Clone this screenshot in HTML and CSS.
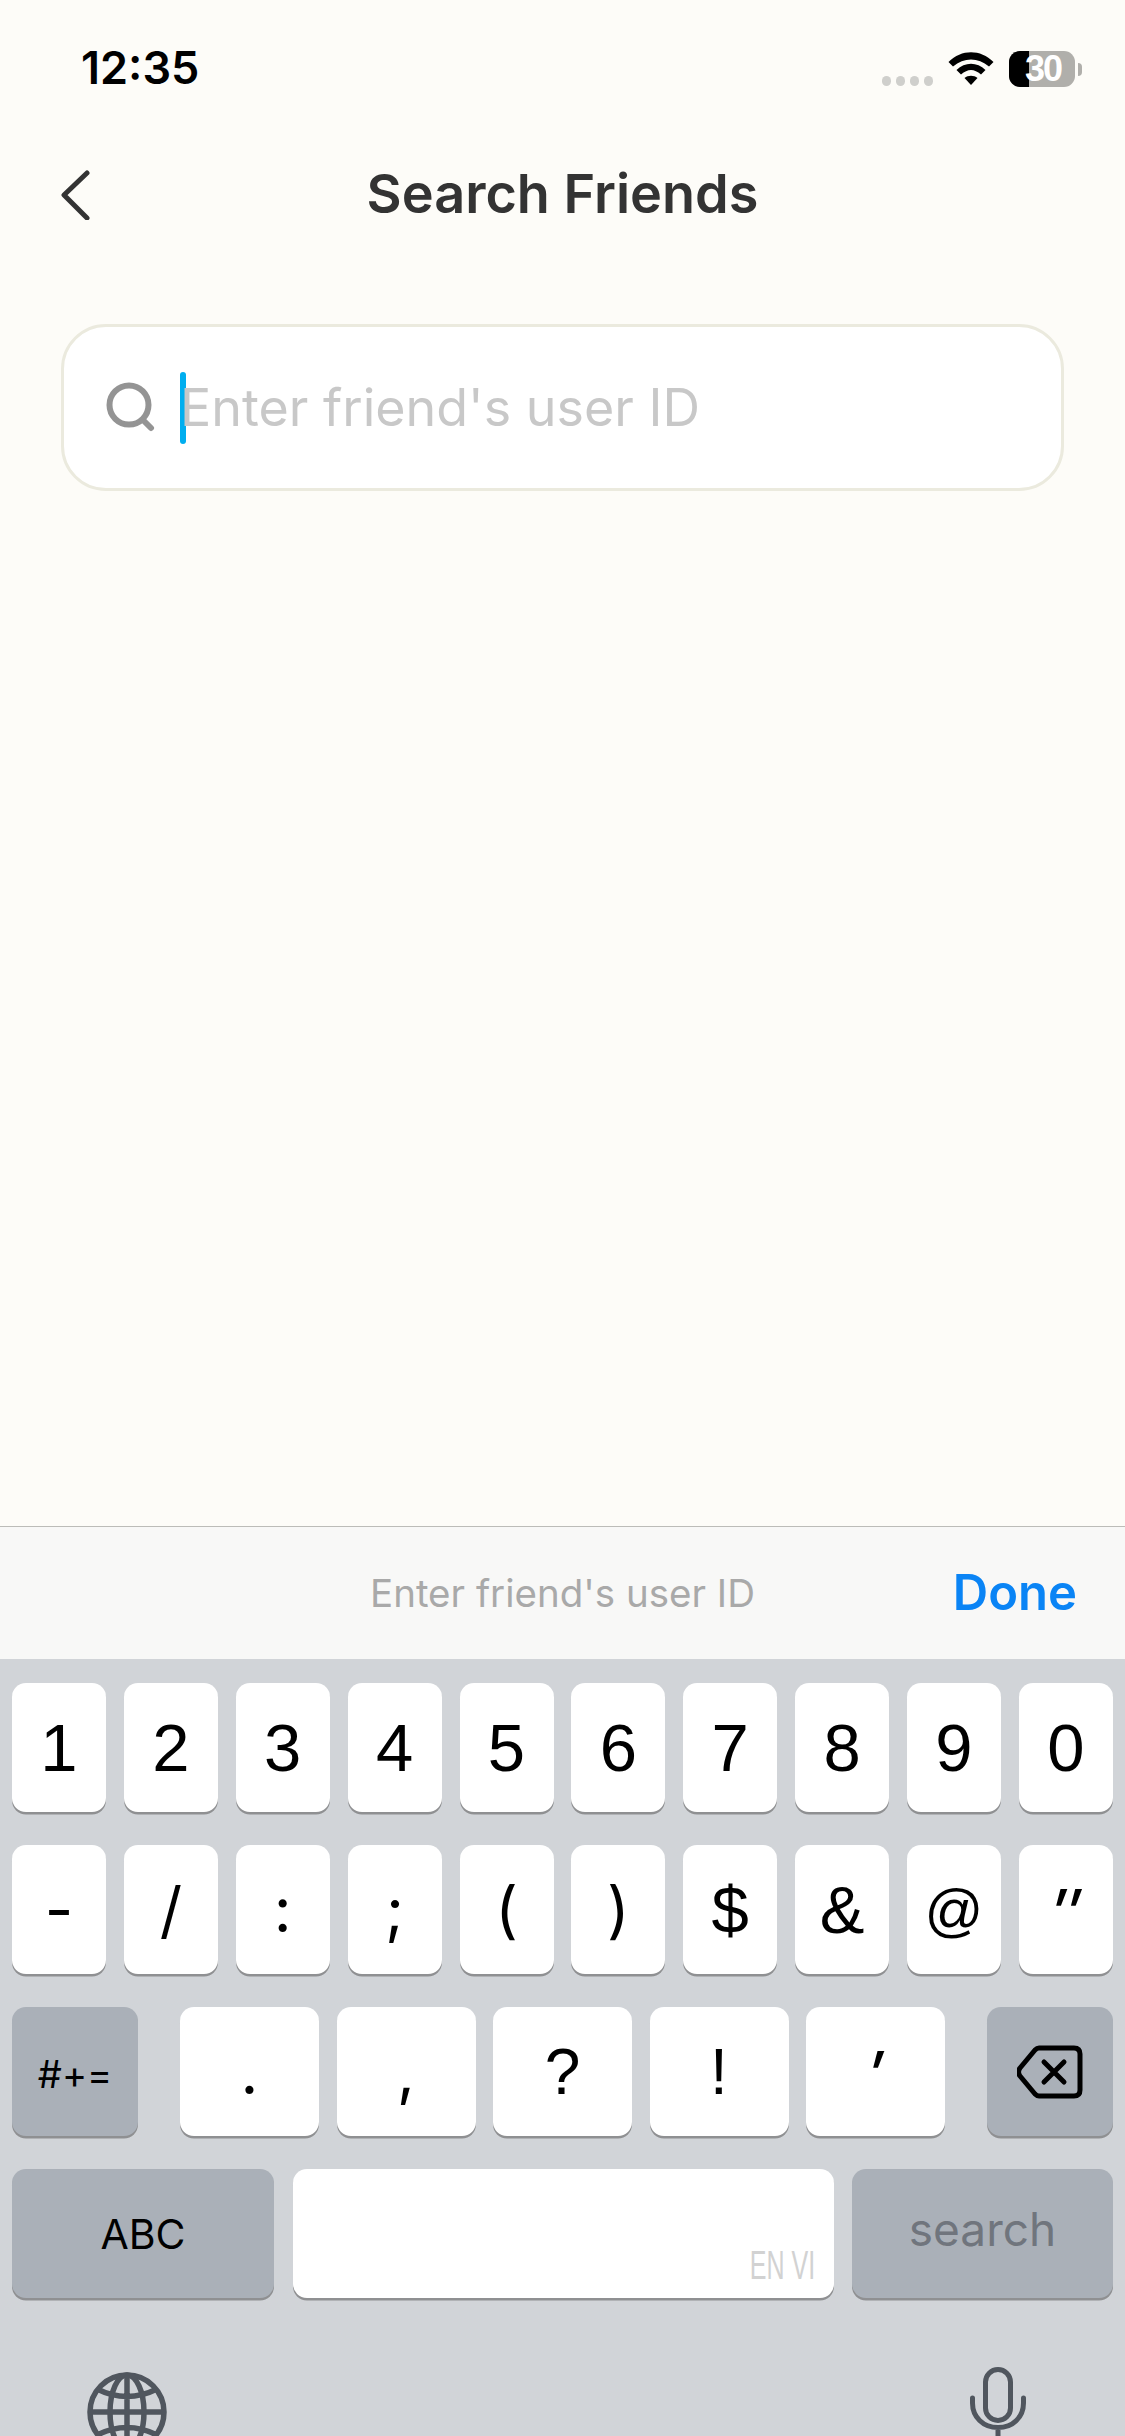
FILE: index.html
```html
<!DOCTYPE html>
<html lang="en">
<head>
<meta charset="utf-8">
<title>Search Friends</title>
<link rel="stylesheet" href="styles.css">
</head>
<body>
<div class="page">
  <div class="status">
    <span class="time">12:35</span>
    <div class="status-icons">
      <div class="dots"><i></i><i></i><i></i><i></i></div>
      <svg class="wifi" viewBox="0 0 46 34"><path d="M0.500 10C13.500 -3 32.500 -3 45.500 10L41 14.500C30 5 16 5 5 14.500Z"/><path d="M8.500 18C17 9.500 29 9.500 37.500 18L33 22.500C26 16.500 20 16.500 13 22.500Z"/><path d="M16.500 26C20 23 26 23 29.500 26L23 33Z"/></svg>
      <div class="battery"><div class="batt-fill"></div><span class="batt-num">30</span></div>
      <div class="batt-nub"></div>
    </div>
  </div>
  <div class="nav">
    <svg class="back" viewBox="0 0 30 50"><path d="M27 3 L4 25 L27 48"/></svg>
    <h1 class="title">Search Friends</h1>
  </div>
  <div class="search">
    <svg class="search-icon" viewBox="0 0 50 54"><circle cx="24" cy="24" r="19.500"/><path d="M38 39 L46 47"/></svg>
    <span class="caret"></span>
    <span class="placeholder">Enter friend's user ID</span>
  </div>
  <div class="spacer"></div>
  <div class="toolbar">
    <span class="tool-hint">Enter friend's user ID</span>
    <span class="done">Done</span>
  </div>
  <div class="keyboard">
    <div class="row">
      <div class="key num">1</div><div class="key num">2</div><div class="key num">3</div><div class="key num">4</div><div class="key num">5</div><div class="key num">6</div><div class="key num">7</div><div class="key num">8</div><div class="key num">9</div><div class="key num">0</div>
    </div>
    <div class="row">
      <div class="key sym">-</div><div class="key sym">/</div><div class="key sym">:</div><div class="key sym">;</div><div class="key sym">(</div><div class="key sym">)</div><div class="key num">$</div><div class="key num">&amp;</div><div class="key num at">@</div><div class="key sym slant">″</div>
    </div>
    <div class="row">
      <div class="key dark side small">#+=</div>
      <div class="punct">
        <div class="key wide">.</div><div class="key wide">,</div><div class="key wide lib">?</div><div class="key wide lib">!</div><div class="key wide slant">′</div>
      </div>
      <div class="key dark side">
        <svg class="del" viewBox="0 0 66 54"><path d="M22 3H57Q63 3 63 9V45Q63 51 57 51H22Q20 51 18 49L3 31Q0 27 3 23L18 5Q20 3 22 3Z"/><path d="M27 17L47 37M47 17L27 37"/></svg>
      </div>
    </div>
    <div class="row">
      <div class="key dark abc">ABC</div>
      <div class="key space"><span class="lang">EN VI</span></div>
      <div class="key dark go">search</div>
    </div>
    <div class="bottom">
      <svg class="globe" viewBox="0 0 80 80"><circle cx="40" cy="40" r="37"/><ellipse cx="40" cy="40" rx="17" ry="37"/><path d="M40 3V77M3 40H77M10 17Q40 32 70 17M10 63Q40 48 70 63"/></svg>
      <svg class="mic" viewBox="0 0 56 70"><rect x="15.500" y="2.500" width="25" height="51" rx="12.500"/><path d="M2.500 31V36C2.500 50 13 60.500 28 60.500C43 60.500 53.500 50 53.500 36V31M28 60.500V70"/></svg>
    </div>
  </div>
</div>
</body>
</html>
```
FILE: styles.css
```css
* { box-sizing: border-box; }
html, body { margin: 0; padding: 0; }
body { width: 1125px; height: 2436px; overflow: hidden; font-family: Inter, "Liberation Sans", sans-serif; }
.page { width: 1125px; height: 2436px; display: flex; flex-direction: column; background: #fdfcf8; overflow: hidden; }

.status { height: 132px; flex: none; display: flex; justify-content: space-between; align-items: flex-start; padding: 42px 43px 0 81px; }
.time { font-size: 45px; font-weight: 600; line-height: 52px; color: #000; }
.status-icons { display: flex; align-items: flex-start; padding-top: 9px; }
.dots { display: flex; gap: 4.500px; margin-top: 25px; margin-right: 15px; }
.dots i { width: 9.500px; height: 9.500px; border-radius: 50%; background: #cfcfcc; }
.wifi { width: 46px; height: 34px; margin-right: 15px; margin-top: 1px; fill: #000; }
.battery { position: relative; width: 66px; height: 36px; border-radius: 11px; background: #b0afab; }
.batt-fill { width: 20px; height: 36px; border-radius: 11px 0 0 11px; background: #000; }
.batt-num { position: absolute; left: 16px; top: 0; font-family: "Liberation Sans", sans-serif; font-size: 36px; letter-spacing: -2px; line-height: 36px; font-weight: 700; color: #fff; }
.batt-nub { width: 4px; height: 13px; margin: 12px 0 0 3px; border-radius: 0 4px 4px 0; background: #b0afab; }

.nav { position: relative; height: 126px; flex: none; display: flex; align-items: center; justify-content: center; padding-bottom: 2px; }
.back { position: absolute; left: 60px; top: 38px; width: 30px; height: 50px; fill: none; stroke: #333; stroke-width: 5; stroke-linecap: round; stroke-linejoin: round; }
.title { margin: 0; font-size: 54px; font-weight: 600; color: #333; line-height: 64px; }

.search { flex: none; height: 167px; margin: 66px 61px 0; display: flex; align-items: center; padding-left: 41px; background: #fff; border: 3px solid #ebeade; border-radius: 45px; }
.search-icon { width: 50px; height: 54px; fill: none; stroke: #949494; stroke-width: 6; stroke-linecap: round; margin-right: 25px; }
.caret { width: 6px; height: 72px; border-radius: 3px; background: #00aeef; flex: none; }
.placeholder { font-size: 52px; color: #c8c8c8; line-height: 60px; margin-left: -6px; }

.spacer { flex: 1; }

.toolbar { position: relative; height: 133px; flex: none; display: flex; align-items: center; justify-content: center; background: #f8f8f7; border-top: 1px solid #bcbcb8; }
.tool-hint { font-size: 38.500px; color: #a9a9a9; }
.done { position: absolute; right: 48px; top: 37px; font-size: 49px; font-weight: 600; line-height: 58px; color: #0a84f5; }

.keyboard { height: 777px; flex: none; display: flex; flex-direction: column; gap: 33px; padding: 24px 12px 0; background: #d1d4d8; }
.row { display: flex; justify-content: space-between; height: 129px; flex: none; }
.key { height: 129px; display: flex; align-items: center; justify-content: center; border-radius: 14px; background: #fff; box-shadow: 0 2.500px 0 #8f9092; color: #000; font-size: 44px; }
.num { width: 94px; font-family: "Liberation Sans", sans-serif; font-size: 67px; }
.at { font-size: 58px; }
.sym { width: 94px; font-size: 62px; font-weight: 400; }
.slant { font-style: italic; font-weight: 500; padding-top: 4px; }
.punct { display: flex; gap: 17.500px; }
.wide { width: 139px; font-size: 62px; }
.lib { font-family: "Liberation Sans", sans-serif; font-size: 64px; }
.dark { background: #aab0b8; }
.side { width: 126px; }
.small { font-size: 38px; padding-top: 5px; }
.del { width: 66px; height: 54px; fill: none; stroke: #000; stroke-width: 5; stroke-linecap: round; stroke-linejoin: round; }
.abc { width: 262px; font-size: 41px; }
.space { position: relative; width: 541px; }
.lang { position: absolute; right: 18px; bottom: 15px; font-family: "Liberation Sans", sans-serif; font-size: 41px; line-height: 36px; color: #d2d2d2; transform: scaleX(0.61); transform-origin: right bottom; }
.go { width: 261px; color: #70757d; font-size: 46px; padding-bottom: 9px; }
.bottom { position: relative; flex: 1; display: flex; justify-content: space-between; align-items: flex-start; padding: 41px 87px 0 75px; }
.globe { width: 80px; height: 80px; fill: none; stroke: #50565e; stroke-width: 5.500; }
.mic { width: 56px; height: 70px; margin-top: -5px; fill: none; stroke: #50565e; stroke-width: 5; stroke-linecap: round; }
```
